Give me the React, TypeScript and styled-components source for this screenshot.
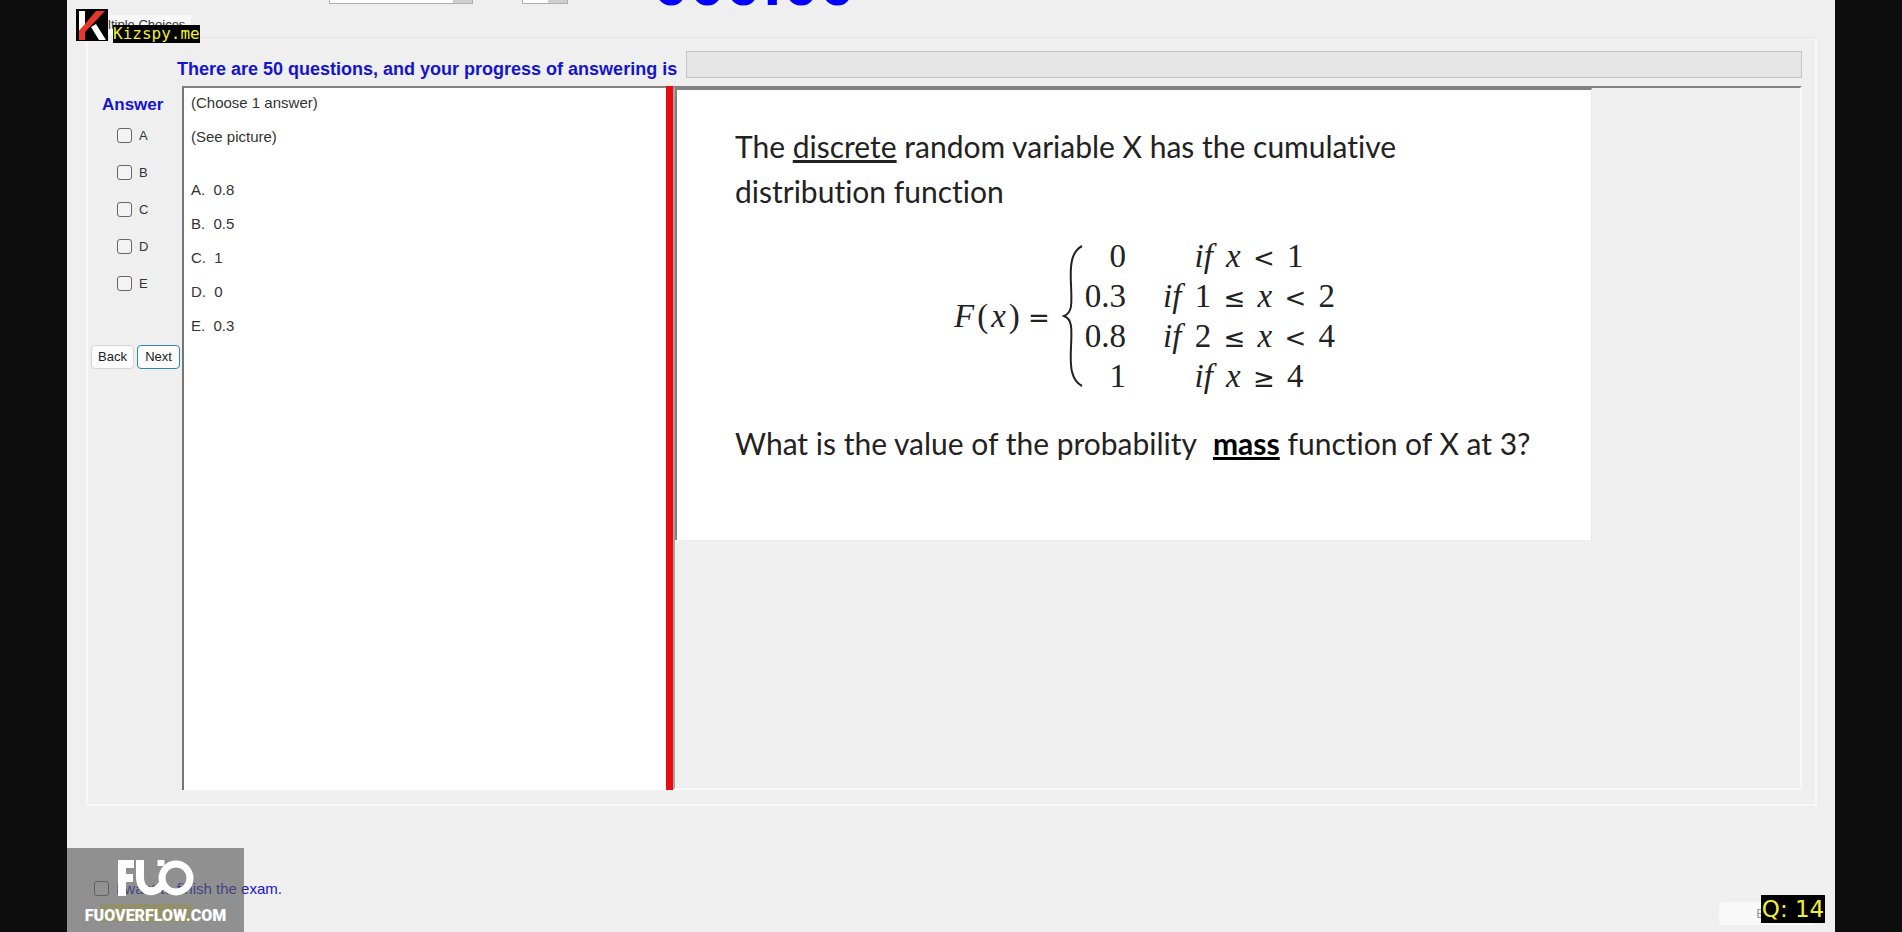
import React from "react";
import styled, { createGlobalStyle } from "styled-components";

const Global = createGlobalStyle`
  *, *::before, *::after { box-sizing: border-box; }
  body { margin: 0; background: #0d0d0d; font-family: "Liberation Sans", Arial, sans-serif; }
  p { margin: 0; }
`;

const Screen = styled.div`
  padding: 0 67px;
  min-height: 100vh;
  display: flex;
  overflow: hidden;
`;

const Form = styled.main`
  position: relative;
  flex: 1;
  min-width: 0;
  background: #efefef;
  display: flex;
  flex-direction: column;
  padding: 0 18px 0 19px;
`;

const TopStrip = styled.header`
  display: flex;
  align-items: flex-end;
  height: 15px;
  overflow: hidden;
  padding: 0 0 11px 243px;
`;

const Combo = styled.select<{ $width: number }>`
  width: ${(p) => p.$width}px;
  height: 24px;
  margin-right: 49px;
  border: 1px solid #b0b0b0;
  border-radius: 0;
  flex: none;
  appearance: none;
  background: linear-gradient(90deg, #fff, #fff) left / calc(100% - 19px) 100% no-repeat #cfcfcf;
`;

const Clock = styled.div`
  flex: none;
  margin-left: 36px;
  font-size: 65px;
  line-height: 42px;
  font-weight: bold;
  color: #0000ff;
  height: 42px;
`;

const TabBar = styled.div`
  height: 22px;
`;

const Tab = styled.button`
  width: 105px;
  height: 20px;
  border: 0;
  padding: 0 0 0 4px;
  text-align: left;
  background: #f8f8f8;
  font: 13px/20px "Liberation Sans", Arial, sans-serif;
  color: #333;
  white-space: nowrap;
`;

const Group = styled.section`
  border: 2px solid #f8f8f8;
  border-top: 1px solid #e4e4e4;
  height: 769px;
  display: flex;
  flex-direction: column;
  padding: 13px 13px 14px 0;
`;

const ProgressRow = styled.div`
  display: flex;
  align-items: flex-start;
  height: 35px;
  padding-left: 89px;
`;

const ProgressLabel = styled.div`
  width: 509px;
  flex: none;
  font-size: 18px;
  line-height: 36px;
  font-weight: bold;
  color: #1414d0;
  white-space: nowrap;
`;

const ProgressTrack = styled.div`
  flex: 1;
  height: 27px;
  border: 1px solid #c4c4c4;
  background: #e5e5e5;
`;

const Panels = styled.div`
  flex: 1;
  display: flex;
  min-height: 0;
`;

const AnswerColumn = styled.div`
  width: 94px;
  flex: none;
  padding-top: 9px;
`;

const AnswerTitle = styled.h2`
  margin: 0 0 11px 14px;
  font-size: 17px;
  line-height: 20px;
  color: #1414d0;
`;

const Choice = styled.label`
  display: flex;
  align-items: center;
  gap: 7px;
  height: 18px;
  margin: 0 0 19px 29px;
  font-size: 13px;
  color: #333;
`;

const Check = styled.input`
  appearance: none;
  width: 15px;
  height: 15px;
  margin: 0;
  border: 1px solid #666;
  border-radius: 3px;
  background: #f3f3f3;
`;

const NavButtons = styled.div`
  display: flex;
  gap: 3px;
  padding: 34px 0 0 3px;
`;

const NavButton = styled.button<{ $focused?: boolean }>`
  width: 43px;
  height: 24px;
  padding: 0;
  border: ${(p) => (p.$focused ? "1px solid #2a86c8" : "1px solid #d6d6d6")};
  border-radius: 4px;
  background: #fcfcfc;
  font: 13px/20px "Liberation Sans", Arial, sans-serif;
  color: #222;
`;

const QuestionBox = styled.div`
  width: 484px;
  flex: none;
  border-top: 2px solid #828282;
  border-left: 2px solid #767676;
  background: #fff;
  padding: 5px 0 0 7px;
  font-size: 15px;
  color: #333;
`;

const QuestionLine = styled.p<{ $gap?: boolean }>`
  height: 20px;
  line-height: 20px;
  margin-bottom: ${(p) => (p.$gap ? 33 : 14)}px;
  white-space: pre;
`;

const Splitter = styled.div`
  width: 7px;
  flex: none;
  background: #e60c10;
`;

const PicturePanel = styled.div`
  flex: 1;
  min-width: 0;
  border: 2px solid #828282;
  border-right-color: #f8f8f8;
  border-bottom-color: #f8f8f8;
  border-left-color: #a8a29e;
`;

const Picture = styled.figure`
  margin: 0;
  width: 917px;
  height: 452px;
  background: #fff;
  border-left: 2px solid #828282;
  border-top: 2px solid #828282;
  border-right: 1px solid #e8e8e8;
  padding: 34px 0 0 58px;
  font-family: Lato, sans-serif;
  font-size: 30px;
  font-variant-ligatures: none;
  color: #222;
  white-space: nowrap;
`;

const Statement = styled.p`
  line-height: 45px;
`;

const Formula = styled.div`
  display: flex;
  align-items: center;
  margin: 22px 0 25px 219px;
  font-family: "Liberation Serif", serif;
  font-size: 33px;
  height: 160px;
`;

const Lhs = styled.span`
  width: 108px;
  flex: none;
  i { margin-right: 3px; }
  i:last-of-type { margin-left: 3px; }
`;

const Rel = styled.span`
  margin: 0 4px;
  font-family: "DejaVu Sans", sans-serif;
  font-size: 26px;
  line-height: 30px;
`;

const Equals = styled(Rel)`
  margin: 0;
`;

const If = styled.i`
  margin-right: 5px;
`;

const Brace = styled.svg`
  width: 22px;
  height: 142px;
  flex: none;
`;

const Cases = styled.table`
  border-collapse: collapse;
  td {
    padding: 0;
    height: 40px;
    line-height: 40px;
    text-align: center;
  }
  td:first-child { width: 42px; text-align: right; }
  td:last-child { width: 246px; }
`;

const Mass = styled.u`
  margin-left: 9px;
  font-weight: bold;
  color: #000;
`;

const Finish = styled.label`
  display: flex;
  align-items: center;
  gap: 7px;
  margin: 72px 0 0 8px;
  height: 20px;
  font-size: 15px;
  color: #1414d0;
`;

const ExitButton = styled.button`
  position: absolute;
  right: 20px;
  bottom: 7px;
  width: 96px;
  height: 23px;
  border: 0;
  border-radius: 4px;
  background: #f9f9f9;
  font: 13px/20px "Liberation Sans", Arial, sans-serif;
  color: #999;
`;

const QuestionBadge = styled.div`
  position: absolute;
  right: 10px;
  bottom: 9px;
  width: 64px;
  height: 28px;
  background: #000;
  color: #f0f032;
  font: 23px/28px "DejaVu Sans", sans-serif;
  text-align: center;
  white-space: nowrap;
`;

const SpyBadge = styled.div`
  position: absolute;
  left: 9px;
  top: 9px;
  display: flex;
  gap: 5px;
  svg { width: 32px; height: 32px; flex: none; }
  span {
    margin-top: 16px;
    height: 18px;
    background: #000;
    color: #f0f032;
    font: 16px/18px "DejaVu Sans Mono", monospace;
  }
`;

const Watermark = styled.div`
  position: absolute;
  left: 0;
  bottom: 0;
  width: 177px;
  height: 84px;
  background:
    linear-gradient(rgba(150, 145, 20, 0.3), rgba(150, 145, 20, 0.3)) 33px 56px / 92px 18px no-repeat,
    rgba(90, 90, 90, 0.64);
  display: flex;
  flex-direction: column;
  align-items: center;
  svg { width: 78px; height: 38px; margin-top: 11px; }
  span {
    font: 900 16px/30px Roboto, sans-serif;
    color: #fff;
    margin-top: 4px;
  }
`;

const lines = ["A.  0.8", "B.  0.5", "C.  1", "D.  0", "E.  0.3"];

export default function App() {
  return (
    <Screen>
      <Global />
      <Form>
        <TopStrip>
          <Combo $width={144} aria-label="Font" />
          <Combo $width={46} aria-label="Size" />
          <Clock>000:00</Clock>
        </TopStrip>
        <TabBar><Tab>Multiple Choices</Tab></TabBar>
        <Group>
          <ProgressRow>
            <ProgressLabel id="progress-label">There are 50 questions, and your progress of answering is</ProgressLabel>
            <ProgressTrack role="progressbar" aria-labelledby="progress-label" />
          </ProgressRow>
          <Panels>
            <AnswerColumn>
              <AnswerTitle>Answer</AnswerTitle>
              {["A", "B", "C", "D", "E"].map((c) => (
                <Choice key={c}><Check type="checkbox" />{c}</Choice>
              ))}
              <NavButtons>
                <NavButton>Back</NavButton>
                <NavButton $focused>Next</NavButton>
              </NavButtons>
            </AnswerColumn>
            <QuestionBox>
              <QuestionLine>(Choose 1 answer)</QuestionLine>
              <QuestionLine $gap>(See picture)</QuestionLine>
              {lines.map((l) => <QuestionLine key={l}>{l}</QuestionLine>)}
            </QuestionBox>
            <Splitter />
            <PicturePanel>
              <Picture>
                <Statement>The <u>discrete</u> random variable X has the cumulative</Statement>
                <Statement>distribution function</Statement>
                <Formula>
                  <Lhs><i>F</i>(<i>x</i>) <Equals>=</Equals></Lhs>
                  <Brace viewBox="0 0 22 142" fill="none" stroke="#222" strokeWidth="2">
                    <path d="M20 1C9 7 8 20 9 40C10 60 10 68 2 71C10 74 10 82 9 102C8 122 9 135 20 141" />
                  </Brace>
                  <Cases>
                    <tbody>
                      <tr><td>0</td><td><If>if</If> <i>x</i> <Rel>&lt;</Rel> 1</td></tr>
                      <tr><td>0.3</td><td><If>if</If> 1 <Rel>≤</Rel> <i>x</i> <Rel>&lt;</Rel> 2</td></tr>
                      <tr><td>0.8</td><td><If>if</If> 2 <Rel>≤</Rel> <i>x</i> <Rel>&lt;</Rel> 4</td></tr>
                      <tr><td>1</td><td><If>if</If> <i>x</i> <Rel>≥</Rel> 4</td></tr>
                    </tbody>
                  </Cases>
                </Formula>
                <Statement>What is the value of the probability <Mass>mass</Mass> function of X at 3?</Statement>
              </Picture>
            </PicturePanel>
          </Panels>
        </Group>
        <Finish><Check type="checkbox" />I want to finish the exam.</Finish>
        <ExitButton>Exit</ExitButton>
        <QuestionBadge>Q: 14</QuestionBadge>
        <SpyBadge>
          <svg viewBox="0 0 32 32">
            <path d="M0 0h32v32H0z" fill="#000" />
            <path d="M3 2h6v14L3 22z" fill="#fff" />
            <path d="M15 18l5-3 10 16h-7z" fill="#fff" />
            <path d="M20 2h9L9 23v8H3v-9z" fill="#e8382a" />
          </svg>
          <span>Kizspy.me</span>
        </SpyBadge>
        <Watermark>
          <svg viewBox="0 0 78 38" fill="none" stroke="#fff">
            <path d="M5 37V5H17M5 19H16" strokeWidth="8" />
            <path d="M23 1V18C23 28 29 33 36 32Q42 31 45 25" strokeWidth="8" />
            <path d="M44 1V7" strokeWidth="7" />
            <circle cx="59" cy="19" r="14" strokeWidth="7" />
          </svg>
          <span>FUOVERFLOW.COM</span>
        </Watermark>
      </Form>
    </Screen>
  );
}
